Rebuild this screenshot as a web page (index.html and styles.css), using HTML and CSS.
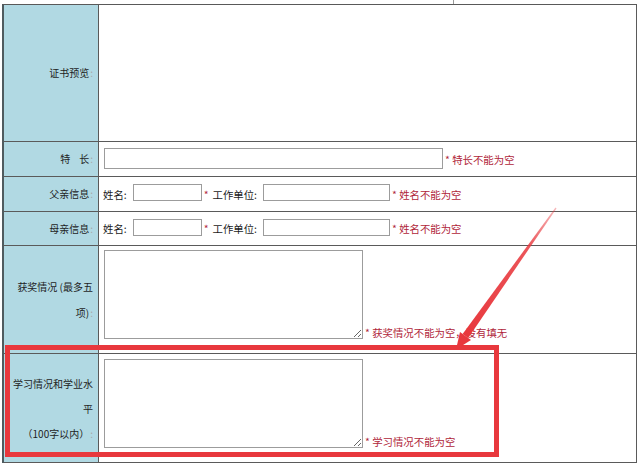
FILE: index.html
```html
<!DOCTYPE html>
<html lang="zh-CN">
<head>
<meta charset="utf-8">
<title>表单</title>
<link rel="stylesheet" href="styles.css">
</head>
<body>
<div class="page">
  <div class="form">
    <div class="label"><span class="lbl">证书预览<span class="colon">:</span></span></div>
    <div class="field"></div>

    <div class="label"><span class="lbl">特&nbsp;&nbsp;&nbsp;&nbsp;长<span class="colon">:</span></span></div>
    <div class="field field-mid">
      <input class="inp inp-long" type="text">
      <span class="err"><span class="star">*</span> 特长不能为空</span>
    </div>

    <div class="label"><span class="lbl">父亲信息<span class="colon">:</span></span></div>
    <div class="field field-mid">
      <span class="txt">姓名:</span>
      <input class="inp inp-name" type="text">
      <span class="star star-inline">*</span>
      <span class="txt txt-unit">工作单位:</span>
      <input class="inp inp-unit" type="text">
      <span class="err"><span class="star">*</span> 姓名不能为空</span>
    </div>

    <div class="label"><span class="lbl">母亲信息<span class="colon">:</span></span></div>
    <div class="field field-mid">
      <span class="txt">姓名:</span>
      <input class="inp inp-name" type="text">
      <span class="star star-inline">*</span>
      <span class="txt txt-unit">工作单位:</span>
      <input class="inp inp-unit" type="text">
      <span class="err"><span class="star">*</span> 姓名不能为空</span>
    </div>

    <div class="label label-award"><span class="lbl">获奖情况 (最多五<br>项)<span class="colon">:</span></span></div>
    <div class="field field-area">
      <textarea class="area"></textarea>
      <span class="err err-area"><span class="star">*</span> 获奖情况不能为空，没有填无</span>
    </div>

    <div class="label label-study"><span class="lbl">学习情况和学业水<br>平<br>（100字以内）<span class="colon">:</span></span></div>
    <div class="field field-area">
      <textarea class="area"></textarea>
      <span class="err err-area"><span class="star">*</span> 学习情况不能为空</span>
    </div>
  </div>

  <svg class="overlay" width="640" height="463" viewBox="0 0 640 463" aria-hidden="true">
    <defs>
      <linearGradient id="shaft" x1="556" y1="208" x2="466" y2="334" gradientUnits="userSpaceOnUse">
        <stop offset="0" stop-color="#e8383d" stop-opacity="0.35"/>
        <stop offset="0.3" stop-color="#e8383d" stop-opacity="0.85"/>
        <stop offset="1" stop-color="#e8383d" stop-opacity="1"/>
      </linearGradient>
    </defs>
    <line x1="453.5" y1="0" x2="453.5" y2="4" stroke="#999" stroke-width="1"/>
    <rect x="7.5" y="347.5" width="489" height="107" fill="none" stroke="#e8383d" stroke-width="5"/>
    <polygon points="556.5,208.4 468.2,338.0 462.6,334.0 555.5,207.6" fill="url(#shaft)"/>
    <polygon points="456,349.5 471,340 460,332" fill="#e8383d"/>
  </svg>
</div>
</body>
</html>
```

FILE: styles.css
```css
html, body {
  margin: 0;
  padding: 0;
  background: #ffffff;
}

.page {
  position: relative;
  width: 640px;
  height: 463px;
  overflow: hidden;
  font-family: "Noto Sans CJK SC", "Noto Sans", sans-serif;
  font-size: 10.4px;
  color: #1e1e1e;
}

.form {
  position: relative;
  top: 4px;
  left: 2px;
  display: grid;
  grid-template-columns: 95px 538px;
  grid-template-rows: 137px 35px 35px 34px 108px 109px;
  width: max-content;
  border-top: 1px solid #595959;
  border-left: 2px solid #4f5b5f;
}

.label,
.field {
  box-sizing: border-box;
  border-right: 1px solid #5a5a5a;
  border-bottom: 1px solid #5a5a5a;
}

.label {
  background: #b1d9e3;
  display: flex;
  align-items: center;
  justify-content: flex-end;
  padding-right: 5px;
  font-size: 10px;
  line-height: 14px;
}

.lbl {
  display: block;
  text-align: right;
}

.label-award {
  line-height: 26px;
}

.label-study {
  line-height: 25px;
}

.colon {
  color: #a8a8a8;
  margin-left: 1px;
}

.field {
  background: #ffffff;
  padding-left: 5px;
}

.field-mid {
  display: flex;
  align-items: center;
}

.field-area {
  display: flex;
  align-items: flex-end;
  padding-top: 4px;
  padding-bottom: 14px;
}

.inp {
  box-sizing: border-box;
  margin: 0;
  padding: 0 2px;
  border: 1px solid #9c9c9c;
  background: #ffffff;
  font: inherit;
}

.inp-long {
  width: 339px;
  height: 21px;
  margin-top: -2px;
}

.inp-name {
  width: 69px;
  height: 17px;
  margin-left: 6px;
  margin-top: -3px;
}

.inp-unit {
  width: 127px;
  height: 17px;
  margin-left: 6px;
  margin-top: -3px;
}

.txt {
  color: #1a1a1a;
  margin-left: -1px;
}

.txt-unit {
  margin-left: 4px;
}

.star {
  color: #b0263a;
}

.star-inline {
  margin-left: 2px;
}

.err {
  color: #b0263a;
  margin-left: 2px;
  white-space: nowrap;
}

.area {
  box-sizing: border-box;
  width: 259px;
  height: 89px;
  margin: 0;
  border: 1px solid #9c9c9c;
  background: #ffffff;
  font: inherit;
  resize: both;
}

.err-area {
  line-height: 10px;
  margin-left: 2px;
  margin-bottom: 1px;
}

.overlay {
  position: absolute;
  left: 0;
  top: 0;
  pointer-events: none;
}
```
